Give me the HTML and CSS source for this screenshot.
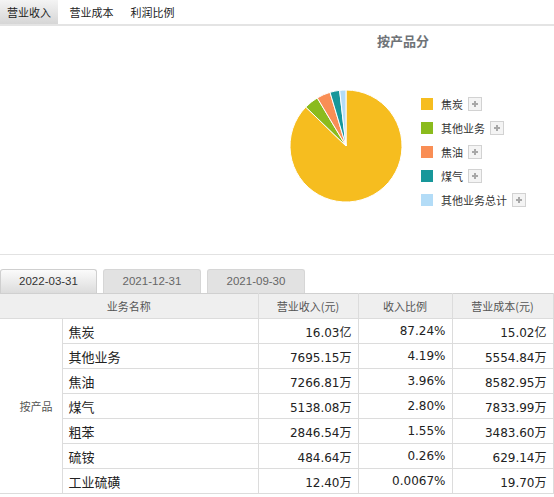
FILE: index.html
```html
<!DOCTYPE html>
<html lang="zh-CN">
<head>
<meta charset="utf-8">
<title>营业收入</title>
<link rel="stylesheet" href="styles.css">
</head>
<body>
<nav class="topnav">
  <span class="tab active">营业收入</span>
  <span class="tab">营业成本</span>
  <span class="tab">利润比例</span>
</nav>
<section class="chart">
  <h3 class="chart-title">按产品分</h3>
  <div class="chart-body">
    <svg class="pie" width="114" height="114" viewBox="-57 -57 114 114">
      <g stroke="#fff" stroke-width="1" stroke-linejoin="round">
        <path fill="#f6bd1f" d="M0,0 L0,-56 A56,56 0 1 1 -40.25,-38.93 Z"/>
        <path fill="#8bbb1d" d="M0,0 L-40.25,-38.93 A56,56 0 0 1 -28.72,-48.08 Z"/>
        <path fill="#f98e55" d="M0,0 L-28.72,-48.08 A56,56 0 0 1 -15.99,-53.66 Z"/>
        <path fill="#17979a" d="M0,0 L-15.99,-53.66 A56,56 0 0 1 -6.36,-55.64 Z"/>
        <path fill="#b3dcf7" d="M0,0 L-6.36,-55.64 A56,56 0 0 1 0,-56 Z"/>
      </g>
    </svg>
    <ul class="legend">
      <li><span class="swatch c1"></span>焦炭<span class="plus"></span></li>
      <li><span class="swatch c2"></span>其他业务<span class="plus"></span></li>
      <li><span class="swatch c3"></span>焦油<span class="plus"></span></li>
      <li><span class="swatch c4"></span>煤气<span class="plus"></span></li>
      <li><span class="swatch c5"></span>其他业务总计<span class="plus"></span></li>
    </ul>
  </div>
</section>
<div class="datetabs">
  <span class="dtab active">2022-03-31</span>
  <span class="dtab">2021-12-31</span>
  <span class="dtab">2021-09-30</span>
</div>
<table class="data">
  <colgroup>
    <col class="w-cat"><col class="w-name"><col class="w-rev"><col class="w-ratio"><col class="w-cost">
  </colgroup>
  <thead>
    <tr><th colspan="2">业务名称</th><th>营业收入(元)</th><th>收入比例</th><th>营业成本(元)</th></tr>
  </thead>
  <tbody>
    <tr><td class="cat" rowspan="7">按产品</td><td class="name">焦炭</td><td class="num">16.03亿</td><td class="num">87.24%</td><td class="num">15.02亿</td></tr>
    <tr><td class="name">其他业务</td><td class="num">7695.15万</td><td class="num">4.19%</td><td class="num">5554.84万</td></tr>
    <tr><td class="name">焦油</td><td class="num">7266.81万</td><td class="num">3.96%</td><td class="num">8582.95万</td></tr>
    <tr><td class="name">煤气</td><td class="num">5138.08万</td><td class="num">2.80%</td><td class="num">7833.99万</td></tr>
    <tr><td class="name">粗苯</td><td class="num">2846.54万</td><td class="num">1.55%</td><td class="num">3483.60万</td></tr>
    <tr><td class="name">硫铵</td><td class="num">484.64万</td><td class="num">0.26%</td><td class="num">629.14万</td></tr>
    <tr><td class="name">工业硫磺</td><td class="num">12.40万</td><td class="num">0.0067%</td><td class="num">19.70万</td></tr>
  </tbody>
</table>
</body>
</html>
```
FILE: styles.css
```css
* { box-sizing: border-box; }
html, body { margin: 0; padding: 0; background: #fff; }
body {
  font-family: "Noto Sans CJK SC", "DejaVu Sans", sans-serif;
  font-size: 12px;
  color: #333;
  width: 554px;
  overflow: hidden;
}

/* top nav */
.topnav {
  display: flex;
  height: 26px;
  border-bottom: 2px solid #e4e4e4;
}
.tab {
  width: 61px;
  height: 24px;
  line-height: 24px;
  text-align: center;
  font-size: 11px;
  color: #222;
}
.tab.active {
  width: 58px;
  margin-right: 3px;
  background: linear-gradient(#f4f4f4, #d6d6d6);
}

/* chart */
.chart {
  height: 229px;
  padding-left: 252px;
  border-bottom: 1px solid #e2e2e2;
}
.chart-title {
  margin: 0;
  padding-top: 4px;
  height: 26px;
  line-height: 22px;
  text-align: center;
  font-size: 13px;
  font-weight: bold;
  color: #6f7377;
}
.chart-body {
  display: flex;
  align-items: flex-start;
  padding-left: 37px;
  padding-top: 37px;
}
.pie { display: block; flex: none; }
.legend {
  list-style: none;
  margin: 3px 0 0 18px;
  padding: 0;
}
.legend li {
  display: flex;
  align-items: center;
  height: 24px;
  font-size: 11px;
  color: #333;
}
.swatch {
  width: 12px;
  height: 12px;
  margin-right: 8px;
  flex: none;
}
.c1 { background: #f6bd1f; }
.c2 { background: #8bbb1d; }
.c3 { background: #f98e55; }
.c4 { background: #17979a; }
.c5 { background: #b3dcf7; }
.plus {
  position: relative;
  width: 14px;
  height: 14px;
  margin-left: 5px;
  border: 1px solid #d2d2d2;
  background: #f4f4f4;
  flex: none;
}
.plus::before, .plus::after {
  content: "";
  position: absolute;
  background: #a8a8a8;
}
.plus::before { left: 3px; top: 5px; width: 6px; height: 2px; }
.plus::after { left: 5px; top: 3px; width: 2px; height: 6px; }

/* date tabs */
.datetabs {
  display: flex;
  gap: 6px;
  margin-top: 14px;
  height: 24px;
}
.dtab {
  width: 98px;
  height: 24px;
  line-height: 23px;
  text-align: center;
  font-family: "Liberation Sans", sans-serif;
  font-size: 11.5px;
  color: #666;
  background: #e2e2e2;
  border: 1px solid #d6d6d6;
  border-bottom: none;
  border-radius: 3px 3px 0 0;
}
.dtab.active {
  width: 97px;
  color: #333;
  background: linear-gradient(#fbfbfb, #dcdcdc);
  border-color: #cfcfcf;
}

/* table */
.data {
  border-collapse: collapse;
  table-layout: fixed;
  width: 553px;
}
.w-cat { width: 62px; }
.w-name { width: 196px; }
.w-rev { width: 100px; }
.w-ratio { width: 94px; }
.w-cost { width: 101px; }
.data th {
  height: 25px;
  background: #efefef;
  color: #555;
  font-weight: normal;
  font-size: 11px;
  text-align: center;
  border: 1px solid #dcdcdc;
  border-top: 1px solid #d0d0d0;
  padding: 0;
}
.data th:first-child { border-left: none; }
.data td {
  height: 25px;
  padding: 0 6px;
  border: 1px solid #dcdcdc;
  font-size: 13px;
  color: #222;
}
.data td.cat {
  border-left: none;
  text-align: right;
  padding-right: 9px;
  font-size: 11px;
  color: #555;
}
.data td.num {
  text-align: right;
  font-family: "DejaVu Sans", "Noto Sans CJK SC", sans-serif;
  font-size: 12px;
}
```
